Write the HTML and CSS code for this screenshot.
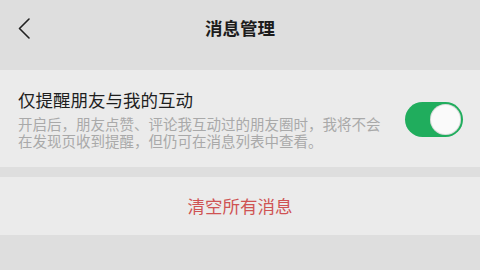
FILE: index.html
```html
<!DOCTYPE html>
<html lang="zh-CN">
<head>
<meta charset="utf-8">
<title>消息管理</title>
<link rel="stylesheet" href="styles.css">
</head>
<body>
<div class="page">
  <header class="header">
    <div class="bar">
      <span class="back">
        <svg width="12" height="21" viewBox="0 0 12 21"><polyline points="11,1 1.5,10.5 11,20" fill="none" stroke="#222" stroke-width="1.6" stroke-linecap="round" stroke-linejoin="round"/></svg>
      </span>
      <h1 class="title">消息管理</h1>
    </div>
  </header>
  <section class="card setting">
    <div class="setting-text">
      <div class="setting-title">仅提醒朋友与我的互动</div>
      <p class="setting-desc">开启后，朋友点赞、评论我互动过的朋友圈时，我将不会在发现页收到提醒，但仍可在消息列表中查看。</p>
    </div>
    <div class="switch on"><span class="knob"></span></div>
  </section>
  <section class="card action">
    <span class="danger">清空所有消息</span>
  </section>
</div>
</body>
</html>
```
FILE: styles.css
```css
html, body {
  margin: 0;
  padding: 0;
  background: #dedede;
  font-family: "Noto Sans CJK SC", "Noto Sans", sans-serif;
}
.page {
  width: 480px;
  height: 270px;
  overflow: hidden;
  background: #dedede;
}
.header {
  height: 70px;
}
.bar {
  position: relative;
  height: 56px;
  display: flex;
  align-items: center;
  justify-content: center;
}
.back {
  position: absolute;
  left: 18px;
  top: 18px;
  width: 12px;
  height: 21px;
  display: flex;
}
.title {
  margin: 0;
  font-size: 17.5px;
  line-height: 22px;
  font-weight: 700;
  color: #1c1c1c;
}
.card {
  background: #ebebeb;
}
.setting {
  display: flex;
  align-items: center;
  justify-content: space-between;
  padding: 19px 17px 18px 18px;
}
.setting-text {
  width: 372px;
}
.setting-title {
  font-size: 17.5px;
  line-height: 22px;
  color: #1e1e1e;
}
.setting-desc {
  margin: 4px 0 0;
  font-size: 14.5px;
  line-height: 17px;
  color: #a9a9a9;
}
.switch {
  width: 58px;
  height: 35px;
  box-sizing: border-box;
  border-radius: 18px;
  background: #20ad5d;
  display: flex;
  align-items: center;
  justify-content: flex-end;
  padding: 2px;
}
.knob {
  width: 31px;
  height: 31px;
  border-radius: 50%;
  background: #fafafa;
  box-shadow: inset 0 0 0 1px rgba(0,0,0,0.12);
}
.action {
  margin-top: 10px;
  height: 58px;
  display: flex;
  align-items: center;
  justify-content: center;
}
.danger {
  font-size: 17.5px;
  line-height: 22px;
  color: #cf5353;
}
```
